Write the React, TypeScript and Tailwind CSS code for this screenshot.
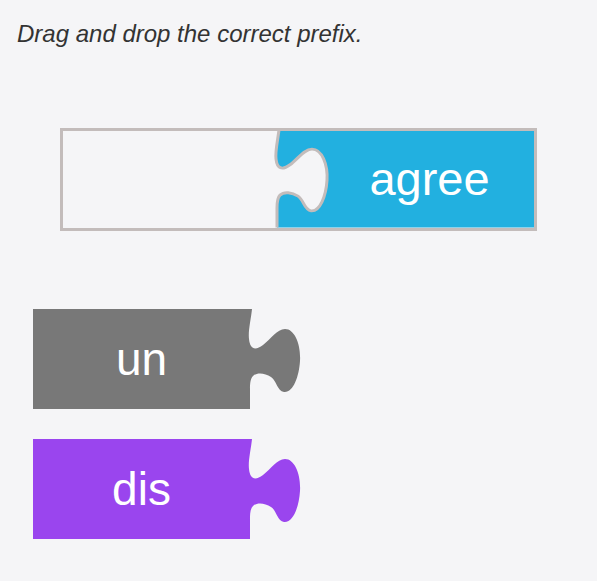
const KNOB =
  'C218 10 215 22 216 30 C217 40 222 42 230 36 C238 30 244 20 252 20 C262 20 268 36 267 52 C266 68 260 84 251 83 C244 82 244 72 238 68 C232 64 224 63 220 67 C217 70 217 76 217 80';

function Piece({ label, color }: { label: string; color: string }) {
  return (
    <div className="relative w-[268px] h-[100px]">
      <svg className="absolute inset-0" width="268" height="100" viewBox="0 0 268 100">
        <path d={`M0 0 H219 ${KNOB} V100 H0 Z`} fill={color} />
      </svg>
      <div className="relative flex h-full w-[217px] items-center justify-center text-[46px] text-white">
        {label}
      </div>
    </div>
  );
}

function DropZone({ word }: { word: string }) {
  return (
    <div className="relative w-[477px] h-[103px]">
      <svg className="absolute inset-0" width="477" height="103" viewBox="0 0 477 103">
        <g transform="translate(0 1.5) scale(1 0.98)">
          <path d={`M219 0 ${KNOB} V100 H477 V0 Z`} fill="#22b0e0" />
          <path d={`M219 0 ${KNOB} V100`} fill="none" stroke="#c3bcbb" strokeWidth="3" />
        </g>
        <rect x="1.5" y="1.5" width="474" height="100" fill="none" stroke="#c3bcbb" strokeWidth="3" />
      </svg>
      <div className="relative flex h-full">
        <div className="w-[262px]" />
        <div className="flex flex-1 items-center justify-center text-[47px] text-white">{word}</div>
      </div>
    </div>
  );
}

export default function App() {
  return (
    <div className="min-h-[581px] bg-[#f5f5f7] font-['Liberation_Sans',Arial,sans-serif]">
      <p className="pl-[17px] pt-[20px] text-[24px] italic leading-[28px] text-[#333333]">
        Drag and drop the correct prefix.
      </p>
      <div className="mt-[80px] pl-[60px]">
        <DropZone word="agree" />
      </div>
      <div className="mt-[78px] flex flex-col gap-[30px] pl-[33px]">
        <Piece label="un" color="#787878" />
        <Piece label="dis" color="#9a45ee" />
      </div>
    </div>
  );
}
